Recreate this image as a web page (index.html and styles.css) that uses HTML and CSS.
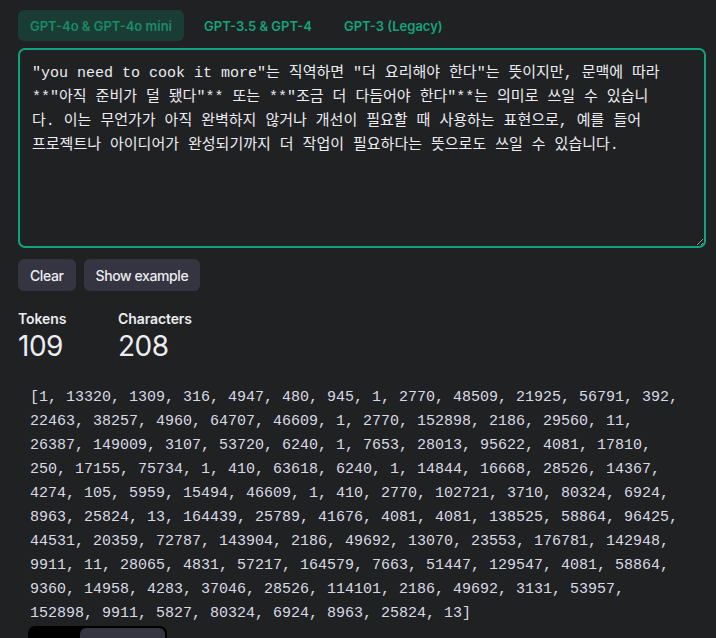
FILE: index.html
```html
<!DOCTYPE html>
<html lang="ko">
<head>
<meta charset="utf-8">
<title>Tokenizer</title>
<link rel="stylesheet" href="styles.css">
</head>
<body>
<div class="page">
  <nav class="tabs">
    <button class="tab active">GPT-4o &amp; GPT-4o mini</button>
    <button class="tab">GPT-3.5 &amp; GPT-4</button>
    <button class="tab">GPT-3 (Legacy)</button>
  </nav>
  <textarea class="input" spellcheck="false">"you need to cook it more"는 직역하면 "더 요리해야 한다"는 뜻이지만, 문맥에 따라 **"아직 준비가 덜 됐다"** 또는 **"조금 더 다듬어야 한다"**는 의미로 쓰일 수 있습니다. 이는 무언가가 아직 완벽하지 않거나 개선이 필요할 때 사용하는 표현으로, 예를 들어 프로젝트나 아이디어가 완성되기까지 더 작업이 필요하다는 뜻으로도 쓰일 수 있습니다.</textarea>
  <div class="actions">
    <button class="btn">Clear</button>
    <button class="btn">Show example</button>
  </div>
  <div class="stats">
    <div class="stat">
      <div class="stat-label">Tokens</div>
      <div class="stat-value">109</div>
    </div>
    <div class="stat">
      <div class="stat-label">Characters</div>
      <div class="stat-value">208</div>
    </div>
  </div>
  <div class="tokens">[1, 13320, 1309, 316, 4947, 480, 945, 1, 2770, 48509, 21925, 56791, 392, 22463, 38257, 4960, 64707, 46609, 1, 2770, 152898, 2186, 29560, 11, 26387, 149009, 3107, 53720, 6240, 1, 7653, 28013, 95622, 4081, 17810, 250, 17155, 75734, 1, 410, 63618, 6240, 1, 14844, 16668, 28526, 14367, 4274, 105, 5959, 15494, 46609, 1, 410, 2770, 102721, 3710, 80324, 6924, 8963, 25824, 13, 164439, 25789, 41676, 4081, 4081, 138525, 58864, 96425, 44531, 20359, 72787, 143904, 2186, 49692, 13070, 23553, 176781, 142948, 9911, 11, 28065, 4831, 57217, 164579, 7663, 51447, 129547, 4081, 58864, 9360, 14958, 4283, 37046, 28526, 114101, 2186, 49692, 3131, 53957, 152898, 9911, 5827, 80324, 6924, 8963, 25824, 13]</div>
  <div class="toggle">
    <button class="seg">Text</button>
    <button class="seg on">Token IDs</button>
  </div>
</div>
</body>
</html>
```
FILE: styles.css
```css
* { box-sizing: border-box; }
html, body { margin: 0; background: #202123; }
body {
  font-family: Inter, "Noto Sans", "Noto Sans CJK KR", sans-serif;
  color: #ececf1;
  overflow: hidden;
}
.page {
  padding: 10px 0 0 18px;
  width: 716px;
}
.tabs {
  display: flex;
  gap: 8px;
}
.tab {
  font-family: Inter, sans-serif;
  font-weight: 600;
  font-size: 13px;
  height: 31px;
  padding: 0 12px;
  border: 0;
  border-radius: 6px;
  background: transparent;
  color: #13a47c;
}
.tab.active {
  background: #1b3c34;
  color: #1a8a68;
}
.input {
  display: block;
  margin-top: 7px;
  width: 688px;
  height: 200px;
  padding: 12px 43px 12px 12px;
  border: 2px solid #10a37f;
  border-radius: 7px;
  background: #202123;
  color: #ececf1;
  font-family: "Liberation Mono", "Noto Sans CJK KR", monospace;
  font-size: 15px;
  line-height: 24px;
  outline: none;
  resize: vertical;
}
.actions {
  display: flex;
  gap: 8px;
  margin-top: 11px;
}
.btn {
  height: 32px;
  padding: 0 12px;
  border: 0;
  border-radius: 6px;
  background: #343541;
  color: #ececf1;
  font-family: Inter, sans-serif;
  font-size: 14px;
  font-weight: 500;
  letter-spacing: -0.4px;
}
.stats {
  display: flex;
  margin-top: 18px;
}
.stat { width: 100px; }
.stat-label {
  font-size: 14px;
  font-weight: 600;
  line-height: 20px;
  letter-spacing: -0.1px;
}
.stat-value {
  font-size: 28px;
  font-weight: 400;
  line-height: 34px;
  letter-spacing: -0.5px;
}
.tokens {
  margin-top: 11px;
  padding: 12px 12px 0;
  width: 684px;
  font-family: "Liberation Mono", monospace;
  font-size: 15px;
  line-height: 24px;
  color: #d9d9e3;
}
.toggle {
  display: inline-flex;
  margin: 0 0 0 10px;
  background: #000;
  border-radius: 7px;
  padding: 2px;
  height: 36px;
}
.seg {
  border: 0;
  background: transparent;
  color: #ececf1;
  font-family: Inter, sans-serif;
  font-size: 14px;
  width: 50px;
  border-radius: 6px;
}
.seg.on {
  width: 85px;
  background: #343541;
}
```
